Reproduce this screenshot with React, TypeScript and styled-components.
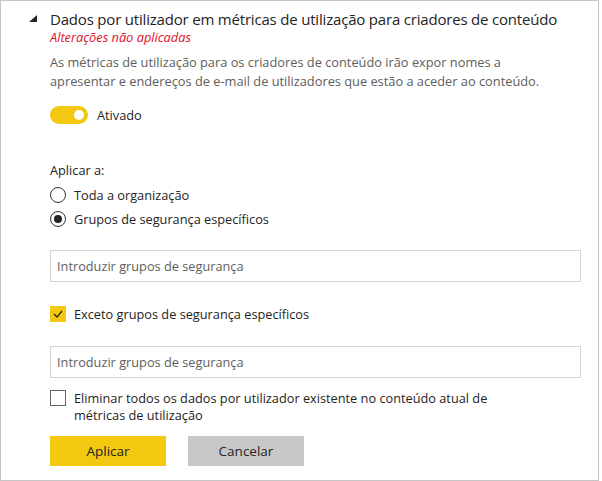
import React from "react";
import styled, { createGlobalStyle } from "styled-components";

const Global = createGlobalStyle`
  html, body { margin: 0; padding: 0; background: #ffffff; }
  * { box-sizing: border-box; }
`;

const Frame = styled.div`
  width: 599px;
  height: 481px;
  border: 1px solid #c6c6c6;
  background: #fff;
  font-family: "Open Sans", sans-serif;
  color: #252423;
  padding: 8px 17px 0 28px;
  display: flex;
  flex-direction: column;
`;

const Header = styled.div`
  display: flex;
  align-items: flex-start;
  gap: 13px;
`;

const Caret = styled.svg`
  width: 8px;
  height: 7px;
  margin-top: 6px;
  flex: none;
`;

const Body = styled.div`
  display: flex;
  flex-direction: column;
  flex: 1;
`;

const Title = styled.div`
  font-size: 15px;
  line-height: 20px;
  letter-spacing: -0.19px;
  color: #252423;
`;

const Pending = styled.div`
  font-size: 12.8px;
  line-height: 17px;
  font-style: italic;
  color: #e0112b;
`;

const Description = styled.p`
  margin: 7px 0 0;
  font-size: 12.8px;
  line-height: 19px;
  color: #605e5c;
`;

const ToggleRow = styled.label`
  display: flex;
  align-items: center;
  gap: 9px;
  margin-top: 15px;
  font-size: 12.75px;
  color: #252423;
`;

const Switch = styled.span`
  width: 38px;
  height: 18px;
  border-radius: 9px;
  background: #f2c811;
  display: flex;
  align-items: center;
  justify-content: flex-end;
  padding-right: 4px;
`;

const Knob = styled.span`
  width: 10px;
  height: 10px;
  border-radius: 50%;
  background: #fff;
`;

const SectionLabel = styled.div`
  margin-top: 37px;
  font-size: 12.75px;
  line-height: 18px;
  color: #252423;
`;

const RadioGroup = styled.div`
  display: flex;
  flex-direction: column;
  gap: 6px;
  margin-top: 7px;
`;

const OptionRow = styled.label`
  display: flex;
  align-items: center;
  gap: 8px;
  font-size: 12.75px;
  line-height: 18px;
  color: #252423;
`;

const Radio = styled.span<{ $checked?: boolean }>`
  width: 16px;
  height: 16px;
  border-radius: 50%;
  border: 1px solid #333;
  display: flex;
  align-items: center;
  justify-content: center;
  flex: none;
  &::after {
    content: "";
    width: 8px;
    height: 8px;
    border-radius: 50%;
    background: ${(p) => (p.$checked ? "#252423" : "transparent")};
  }
`;

const Input = styled.div<{ $top: number }>`
  margin-top: ${(p) => p.$top}px;
  height: 32px;
  border: 1px solid #d4d4d4;
  display: flex;
  align-items: center;
  padding-left: 6px;
  font-size: 12.75px;
  color: #605e5c;
`;

const CheckRow = styled.label<{ $top: number }>`
  display: flex;
  align-items: flex-start;
  gap: 8px;
  margin-top: ${(p) => p.$top}px;
  font-size: 12.75px;
  line-height: 17px;
  color: #252423;
`;

const Box = styled.span<{ $checked?: boolean }>`
  width: 16px;
  height: 16px;
  flex: none;
  border: 1px solid ${(p) => (p.$checked ? "#f2c811" : "#666")};
  background: ${(p) => (p.$checked ? "#f2c811" : "#fff")};
  display: flex;
  align-items: center;
  justify-content: center;
`;

const Buttons = styled.div`
  display: flex;
  gap: 22px;
  margin-top: 12px;
`;

const Button = styled.button<{ $primary?: boolean }>`
  width: 116px;
  height: 30px;
  border: none;
  background: ${(p) => (p.$primary ? "#f2c811" : "#c8c8c8")};
  color: #252423;
  font-family: inherit;
  font-size: 13.5px;
  padding: 0;
`;

export default function App() {
  return (
    <>
      <Global />
      <Frame>
        <Header>
          <Caret viewBox="0 0 8 7">
            <polygon points="8,0 8,7 0,7" fill="#252423" />
          </Caret>
          <Body>
            <Title>Dados por utilizador em métricas de utilização para criadores de conteúdo</Title>
            <Pending>Alterações não aplicadas</Pending>
            <Description>
              As métricas de utilização para os criadores de conteúdo irão expor nomes a
              <br />
              apresentar e endereços de e-mail de utilizadores que estão a aceder ao conteúdo.
            </Description>
            <ToggleRow>
              <Switch>
                <Knob />
              </Switch>
              Ativado
            </ToggleRow>
            <SectionLabel>Aplicar a:</SectionLabel>
            <RadioGroup>
              <OptionRow>
                <Radio />
                Toda a organização
              </OptionRow>
              <OptionRow>
                <Radio $checked />
                Grupos de segurança específicos
              </OptionRow>
            </RadioGroup>
            <Input $top={22}>Introduzir grupos de segurança</Input>
            <CheckRow $top={24}>
              <Box $checked>
                <svg width="10" height="8" viewBox="0 0 10 8">
                  <polyline points="1,4 4,7 9,1" fill="none" stroke="#252423" strokeWidth="1.2" />
                </svg>
              </Box>
              Exceto grupos de segurança específicos
            </CheckRow>
            <Input $top={23}>Introduzir grupos de segurança</Input>
            <CheckRow $top={12}>
              <Box />
              <span>
                Eliminar todos os dados por utilizador existente no conteúdo atual de
                <br />
                métricas de utilização
              </span>
            </CheckRow>
            <Buttons>
              <Button $primary>Aplicar</Button>
              <Button>Cancelar</Button>
            </Buttons>
          </Body>
        </Header>
      </Frame>
    </>
  );
}
